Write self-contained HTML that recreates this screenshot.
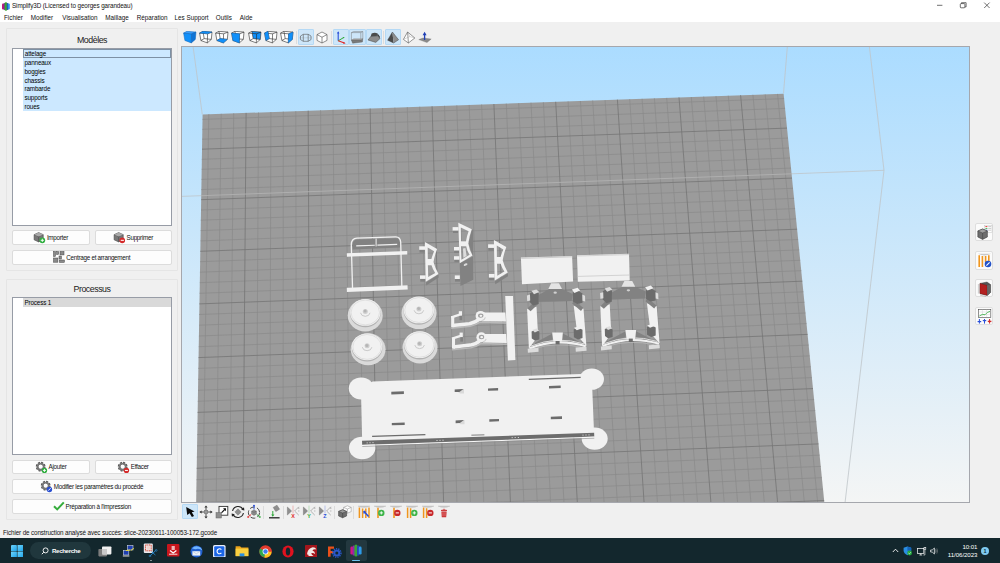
<!DOCTYPE html>
<html lang="fr"><head><meta charset="utf-8"><title>Simplify3D</title>
<style>
*{box-sizing:border-box;margin:0;padding:0}
html,body{width:1000px;height:563px;overflow:hidden;background:#f0f0f0;font-family:"Liberation Sans",sans-serif;color:#000}
.abs{position:absolute}
#titlebar{position:absolute;left:0;top:0;width:1000px;height:22px;background:#fff}
#title{position:absolute;left:12px;top:2px;font-size:6.3px;line-height:8px;color:#111;white-space:nowrap;letter-spacing:-.1px}
.menu{position:absolute;top:13.5px;font-size:6.3px;line-height:8px;color:#111;white-space:nowrap}
.group{position:absolute;border:1px solid #e5e5e5;border-radius:1px;background:#f0f0f0}
.gtitle{position:absolute;left:0;width:100%;text-align:center;font-size:8.8px;line-height:11px;color:#1a1a1a;letter-spacing:-.45px}
.list{position:absolute;background:#fff;border:1px solid #979ca6}
.item{position:absolute;left:9.6px;width:148.6px;height:8.85px;background:#cce8ff;font-size:6.3px;line-height:9.2px;letter-spacing:-.15px;padding-left:1.9px;color:#000;white-space:nowrap}
.btn{position:absolute;height:14.5px;background:#fdfdfd;border:1px solid #dcdcdc;border-radius:2px;font-size:6.3px;letter-spacing:-.28px;line-height:12.5px;white-space:nowrap;color:#111;display:flex;align-items:center;justify-content:center;padding-top:1.2px}
.btn svg{margin-right:1px;flex:none;margin-top:-1.2px}
#viewport{position:absolute;left:181px;top:46px;width:789px;height:457px;border:1px solid #a5a7ad;background:linear-gradient(#abdcff 0%,#f4f5f5 100%);overflow:hidden}
#viewport svg{position:absolute;left:0;top:0}
#status{position:absolute;left:3px;top:528.5px;font-size:6.3px;letter-spacing:-.125px;line-height:8px;color:#111;white-space:nowrap}
#taskbar{position:absolute;left:0;top:538px;width:1000px;height:25px;background:#13272d}
.hl{position:absolute;background:#cde6f9;border:1px solid #b5d9f5;border-radius:1px}
.sep{position:absolute;width:1px;background:#dcdcdc}
</style></head><body>
<div id="titlebar">
<svg class="abs" style="left:2px;top:1.5px" width="8" height="9" viewBox="0 0 8 9"><rect x="0" y="1.6" width="2.2" height="5.8" rx="1" fill="#c2187a"/><rect x="1.6" y="1" width="1.6" height="7" rx=".8" fill="#7a2a9a"/><rect x="2.6" y="0.2" width="2.6" height="8.6" rx="1.3" fill="#3aa635"/><rect x="4.8" y="1" width="1.6" height="7" rx=".8" fill="#2448b8"/><rect x="5.8" y="1.6" width="2" height="5.8" rx="1" fill="#2d9be8"/></svg>
<div id="title">Simplify3D (Licensed to georges garandeau)</div>
<div class="menu" style="left:4px">Fichier</div>
<div class="menu" style="left:30.8px">Modifier</div>
<div class="menu" style="left:62.3px">Visualisation</div>
<div class="menu" style="left:105.3px">Maillage</div>
<div class="menu" style="left:136.8px">Réparation</div>
<div class="menu" style="left:174.6px">Les Support</div>
<div class="menu" style="left:215.8px">Outils</div>
<div class="menu" style="left:239.8px">Aide</div>
<svg class="abs" style="left:930px;top:0" width="70" height="12" viewBox="0 0 70 12"><g stroke="#333" stroke-width="0.7" fill="none"><path d="M7,5.3h5.4"/><rect x="30.3" y="3.6" width="4.6" height="4.2" rx=".8"/><path d="M31.5,3.6v-.9h4.6v4.2h-1.2"/><path d="M54.2,2.6l5.4,5.4M59.6,2.6l-5.4,5.4"/></g></svg>
</div>

<div class="group" style="left:6px;top:28px;width:172px;height:243px">
 <div class="gtitle" style="top:5.8px">Modèles</div>
</div>
<div class="list" style="left:12px;top:48px;width:160px;height:177.5px">
 <div class="item" style="top:0px;border:1px solid #7d90a4;line-height:7.2px;padding-left:1.2px">attelage</div>
 <div class="item" style="top:8.85px">panneaux</div>
 <div class="item" style="top:17.7px">boggies</div>
 <div class="item" style="top:26.55px">chassis</div>
 <div class="item" style="top:35.4px">rambarde</div>
 <div class="item" style="top:44.25px">supports</div>
 <div class="item" style="top:53.1px">roues</div>
</div>
<div class="btn" style="left:12px;top:230px;width:77.5px"><svg width="12.5" height="12.5" viewBox="0 0 11 11"><path d="M1,3.2l4,-1.8l4,1.8v4.6l-4,1.8l-4,-1.8z" fill="#777" stroke="#444" stroke-width=".5"/><path d="M1,3.2l4,1.6l4,-1.6M5,4.8v4.8" stroke="#444" stroke-width=".5" fill="none"/><path d="M1,3.2l4,-1.8l4,1.8l-4,1.6z" fill="#aaa"/><circle cx="8.2" cy="8.2" r="2.5" fill="#2fae3f"/><path d="M6.8,8.2h2.8M8.2,6.8v2.8" stroke="#fff" stroke-width=".8"/></svg>Importer</div>
<div class="btn" style="left:94.5px;top:230px;width:77px"><svg width="12.5" height="12.5" viewBox="0 0 11 11"><path d="M1,3.2l4,-1.8l4,1.8v4.6l-4,1.8l-4,-1.8z" fill="#777" stroke="#444" stroke-width=".5"/><path d="M1,3.2l4,1.6l4,-1.6M5,4.8v4.8" stroke="#444" stroke-width=".5" fill="none"/><path d="M1,3.2l4,-1.8l4,1.8l-4,1.6z" fill="#aaa"/><circle cx="8.2" cy="8.2" r="2.5" fill="#d42a2a"/><path d="M6.8,8.2h2.8" stroke="#fff" stroke-width=".9"/></svg>Supprimer</div>
<div class="btn" style="left:12px;top:250px;width:159.5px"><svg width="12" height="12" viewBox="0 0 12 12"><g fill="#8a8a8a" stroke="#444" stroke-width=".5"><rect x=".5" y=".5" width="2" height="5"/><rect x="3.6" y=".5" width="2" height="3"/><rect x="7" y=".5" width="4" height="3.4"/><rect x=".5" y="7" width="4.4" height="4.2"/><rect x="6" y="5" width="2.4" height="3"/><rect x="6.4" y="9" width="5" height="2.4"/></g></svg>Centrage et arrangement</div>

<div class="group" style="left:6px;top:279px;width:172px;height:241px">
 <div class="gtitle" style="top:3.8px">Processus</div>
</div>
<div class="list" style="left:12px;top:297.3px;width:160px;height:157.5px">
 <div class="item" style="top:0;background:#d9d9d9">Process 1</div>
</div>
<div class="btn" style="left:12px;top:459.6px;width:77.5px;height:14.4px"><svg width="12.5" height="12.5" viewBox="0 0 11 11"><circle cx="5" cy="5" r="3.2" fill="none" stroke="#555" stroke-width="2.2" stroke-dasharray="1.6 .9"/><circle cx="5" cy="5" r="2.7" fill="none" stroke="#777" stroke-width="1.6"/><circle cx="8.3" cy="8.3" r="2.4" fill="#2fae3f"/><path d="M7,8.3h2.6M8.3,7v2.6" stroke="#fff" stroke-width=".8"/></svg>Ajouter</div>
<div class="btn" style="left:94.5px;top:459.6px;width:77px;height:14.4px"><svg width="12.5" height="12.5" viewBox="0 0 11 11"><circle cx="5" cy="5" r="3.2" fill="none" stroke="#555" stroke-width="2.2" stroke-dasharray="1.6 .9"/><circle cx="5" cy="5" r="2.7" fill="none" stroke="#777" stroke-width="1.6"/><circle cx="8.3" cy="8.3" r="2.4" fill="#d42a2a"/><path d="M7,8.3h2.6" stroke="#fff" stroke-width=".9"/></svg>Effacer</div>
<div class="btn" style="left:12px;top:479.2px;width:159.5px"><svg width="12.5" height="12.5" viewBox="0 0 11 11"><circle cx="5" cy="5" r="3.2" fill="none" stroke="#555" stroke-width="2.2" stroke-dasharray="1.6 .9"/><circle cx="5" cy="5" r="2.7" fill="none" stroke="#777" stroke-width="1.6"/><circle cx="8.3" cy="8.3" r="2.4" fill="#2a4fd0"/><path d="M7.2,9.4l2.2,-2.2" stroke="#fff" stroke-width=".8"/></svg>Modifier les paramètres du procédé</div>
<div class="btn" style="left:12px;top:499.4px;width:159.5px;height:14.2px"><svg width="12" height="10" viewBox="0 0 12 10"><path d="M1,5.2l3.2,3.2l6.6,-7" stroke="#36ad3c" stroke-width="2" fill="none"/></svg>Préparation à l'impression</div>

<svg class="abs" style="left:182.6px;top:31.1px" width="14" height="13" viewBox="0 0 14 13"><polygon points="0.6,2.1 8.6,2.8 8.3,11.9 1.9,9.5" fill="#1090fa" stroke="#0d62b8" stroke-width="0.5"/><polygon points="0.6,2.1 8.6,2.8 13.0,1.1 3.9,0.3" fill="#3aa0ff" stroke="#0d62b8" stroke-width="0.5"/><polygon points="8.6,2.8 8.3,11.9 12.3,8.4 13.0,1.1" fill="#0f74d6" stroke="#0d62b8" stroke-width="0.5"/></svg>
<svg class="abs" style="left:198.7px;top:31.1px" width="14" height="13" viewBox="0 0 14 13"><polygon points="0.6,2.1 3.9,0.3 13.0,1.1 12.3,8.4 8.3,11.9 1.9,9.5" fill="#fff" stroke="none"/><polygon points="3.9,0.3 13.0,1.1 12.3,8.4 5.2,7.6" fill="none" stroke="#2a2a2a" stroke-width="0.6"/><polygon points="0.6,2.1 8.6,2.8 8.3,11.9 1.9,9.5" fill="none" stroke="#2a2a2a" stroke-width="0.6"/><path d="M0.6,2.1L3.9,0.3" stroke="#2a2a2a" stroke-width=".6"/><path d="M8.6,2.8L13.0,1.1" stroke="#2a2a2a" stroke-width=".6"/><path d="M8.3,11.9L12.3,8.4" stroke="#2a2a2a" stroke-width=".6"/><path d="M1.9,9.5L5.2,7.6" stroke="#2a2a2a" stroke-width=".6"/><polygon points="0.6,2.1 8.6,2.8 13.0,1.1 3.9,0.3" fill="#1090fa" stroke="#0d5fb0" stroke-width="0.4"/></svg>
<svg class="abs" style="left:214.9px;top:31.1px" width="14" height="13" viewBox="0 0 14 13"><polygon points="0.6,2.1 3.9,0.3 13.0,1.1 12.3,8.4 8.3,11.9 1.9,9.5" fill="#fff" stroke="none"/><polygon points="3.9,0.3 13.0,1.1 12.3,8.4 5.2,7.6" fill="none" stroke="#2a2a2a" stroke-width="0.6"/><polygon points="0.6,2.1 8.6,2.8 8.3,11.9 1.9,9.5" fill="none" stroke="#2a2a2a" stroke-width="0.6"/><path d="M0.6,2.1L3.9,0.3" stroke="#2a2a2a" stroke-width=".6"/><path d="M8.6,2.8L13.0,1.1" stroke="#2a2a2a" stroke-width=".6"/><path d="M8.3,11.9L12.3,8.4" stroke="#2a2a2a" stroke-width=".6"/><path d="M1.9,9.5L5.2,7.6" stroke="#2a2a2a" stroke-width=".6"/><polygon points="1.9,9.5 8.3,11.9 12.3,8.4 5.2,7.6" fill="#1090fa" stroke="#0d5fb0" stroke-width="0.4"/></svg>
<svg class="abs" style="left:231.4px;top:31.1px" width="14" height="13" viewBox="0 0 14 13"><polygon points="0.6,2.1 3.9,0.3 13.0,1.1 12.3,8.4 8.3,11.9 1.9,9.5" fill="#fff" stroke="none"/><polygon points="3.9,0.3 13.0,1.1 12.3,8.4 5.2,7.6" fill="none" stroke="#2a2a2a" stroke-width="0.6"/><polygon points="0.6,2.1 8.6,2.8 8.3,11.9 1.9,9.5" fill="none" stroke="#2a2a2a" stroke-width="0.6"/><path d="M0.6,2.1L3.9,0.3" stroke="#2a2a2a" stroke-width=".6"/><path d="M8.6,2.8L13.0,1.1" stroke="#2a2a2a" stroke-width=".6"/><path d="M8.3,11.9L12.3,8.4" stroke="#2a2a2a" stroke-width=".6"/><path d="M1.9,9.5L5.2,7.6" stroke="#2a2a2a" stroke-width=".6"/><polygon points="0.6,2.1 8.6,2.8 8.3,11.9 1.9,9.5" fill="#1090fa" stroke="#0d5fb0" stroke-width="0.4"/></svg>
<svg class="abs" style="left:247.6px;top:31.1px" width="14" height="13" viewBox="0 0 14 13"><polygon points="0.6,2.1 3.9,0.3 13.0,1.1 12.3,8.4 8.3,11.9 1.9,9.5" fill="#fff" stroke="none"/><polygon points="3.9,0.3 13.0,1.1 12.3,8.4 5.2,7.6" fill="#1090fa" stroke="none"/><polygon points="3.9,0.3 13.0,1.1 12.3,8.4 5.2,7.6" fill="none" stroke="#2a2a2a" stroke-width="0.6"/><polygon points="0.6,2.1 8.6,2.8 8.3,11.9 1.9,9.5" fill="none" stroke="#2a2a2a" stroke-width="0.6"/><path d="M0.6,2.1L3.9,0.3" stroke="#2a2a2a" stroke-width=".6"/><path d="M8.6,2.8L13.0,1.1" stroke="#2a2a2a" stroke-width=".6"/><path d="M8.3,11.9L12.3,8.4" stroke="#2a2a2a" stroke-width=".6"/><path d="M1.9,9.5L5.2,7.6" stroke="#2a2a2a" stroke-width=".6"/></svg>
<svg class="abs" style="left:263.8px;top:31.1px" width="14" height="13" viewBox="0 0 14 13"><polygon points="0.6,2.1 3.9,0.3 13.0,1.1 12.3,8.4 8.3,11.9 1.9,9.5" fill="#fff" stroke="none"/><polygon points="3.9,0.3 13.0,1.1 12.3,8.4 5.2,7.6" fill="none" stroke="#2a2a2a" stroke-width="0.6"/><polygon points="0.6,2.1 8.6,2.8 8.3,11.9 1.9,9.5" fill="none" stroke="#2a2a2a" stroke-width="0.6"/><path d="M0.6,2.1L3.9,0.3" stroke="#2a2a2a" stroke-width=".6"/><path d="M8.6,2.8L13.0,1.1" stroke="#2a2a2a" stroke-width=".6"/><path d="M8.3,11.9L12.3,8.4" stroke="#2a2a2a" stroke-width=".6"/><path d="M1.9,9.5L5.2,7.6" stroke="#2a2a2a" stroke-width=".6"/><polygon points="0.6,2.1 1.9,9.5 5.2,7.6 3.9,0.3" fill="#1090fa" stroke="#0d5fb0" stroke-width="0.4"/></svg>
<svg class="abs" style="left:280.0px;top:31.1px" width="14" height="13" viewBox="0 0 14 13"><polygon points="0.6,2.1 3.9,0.3 13.0,1.1 12.3,8.4 8.3,11.9 1.9,9.5" fill="#fff" stroke="none"/><polygon points="3.9,0.3 13.0,1.1 12.3,8.4 5.2,7.6" fill="none" stroke="#2a2a2a" stroke-width="0.6"/><polygon points="0.6,2.1 8.6,2.8 8.3,11.9 1.9,9.5" fill="none" stroke="#2a2a2a" stroke-width="0.6"/><path d="M0.6,2.1L3.9,0.3" stroke="#2a2a2a" stroke-width=".6"/><path d="M8.6,2.8L13.0,1.1" stroke="#2a2a2a" stroke-width=".6"/><path d="M8.3,11.9L12.3,8.4" stroke="#2a2a2a" stroke-width=".6"/><path d="M1.9,9.5L5.2,7.6" stroke="#2a2a2a" stroke-width=".6"/><polygon points="8.6,2.8 8.3,11.9 12.3,8.4 13.0,1.1" fill="#1090fa" stroke="#0d5fb0" stroke-width="0.4"/></svg>
<div class="sep" style="left:295.8px;top:30.5px;height:13px"></div>
<div class="hl" style="left:298.3px;top:29.2px;width:16px;height:15.6px"></div>
<svg class="abs" style="left:299.3px;top:31.1px" width="14" height="13" viewBox="0 0 14 13"><g fill="none" stroke="#555" stroke-width=".6"><path d="M4.3,3.3H9.2V10.3H4.3z"/><path d="M4.3,3.3L1.5,5V8.6L4.3,10.3M9.2,3.3L12,5V8.6L9.2,10.3"/><path d="M0.4,6.8H13.2" stroke="#888" stroke-width=".4" stroke-dasharray=".8 .5"/></g></svg>
<svg class="abs" style="left:314.9px;top:31.1px" width="14" height="13" viewBox="0 0 14 13"><g fill="#fff" stroke="#444" stroke-width=".6"><path d="M7,1L12,3.6v5.8L7,12L2,9.4V3.6z"/><path d="M2,3.6L7,6.2L12,3.6M7,6.2V12" fill="none"/></g></svg>
<div class="sep" style="left:331px;top:30.5px;height:13px"></div>
<div class="hl" style="left:332.9px;top:29.2px;width:16.4px;height:15.6px"></div>
<div class="hl" style="left:349.2px;top:29.2px;width:16.4px;height:15.6px"></div>
<div class="hl" style="left:365.5px;top:29.2px;width:16.4px;height:15.6px"></div>
<svg class="abs" style="left:334.1px;top:31.1px" width="14" height="13" viewBox="0 0 14 13"><path d="M4.2,1.2V9.8" stroke="#2a4fd8" stroke-width="1.1"/><path d="M4.2,9.8L9.6,6.6" stroke="#2faa3a" stroke-width="1"/><path d="M4.2,9.8L10.4,12" stroke="#e02626" stroke-width="1.1"/><path d="M3,2.4L4.2,0.2L5.4,2.4z" fill="#2a4fd8"/><path d="M8.6,6L10.6,6L9.6,7.6z" fill="#2faa3a"/><path d="M9.6,10.8L11.6,12.4L9.2,12.8z" fill="#e02626"/></svg>
<svg class="abs" style="left:350.4px;top:31.1px" width="14" height="13" viewBox="0 0 14 13"><g fill="none" stroke="#777" stroke-width=".5"><path d="M1.4,1.6H10.8V9H1.4z"/><path d="M3.6,0.6H12.8V7.4"/><path d="M1.4,1.6L3.6,0.6M10.8,1.6L12.8,0.6"/></g><path d="M1.4,9L10.8,9L12.8,7.4L12.4,11L2.6,12.2z" fill="#7a7a7a" stroke="#555" stroke-width=".4"/><path d="M1.4,9L10.8,9L12.8,7.4L3.6,7.4z" fill="#9a9a9a"/></svg>
<svg class="abs" style="left:366.7px;top:31.1px" width="14" height="13" viewBox="0 0 14 13"><path d="M1,9L3.6,5.6L11,4.8L13,7.6L8.8,11.4z" fill="#8c8c8c" stroke="#4a4a4a" stroke-width=".5"/><path d="M3.6,5.6L4.6,2.6Q7.5,1.2 10.6,2.4L11,4.8z" fill="#4a4a4a"/><path d="M11,4.8L10.6,2.4L12.6,5.2L13,7.6z" fill="#333"/></svg>
<div class="sep" style="left:383px;top:30.5px;height:13px"></div>
<div class="hl" style="left:385.0px;top:29.2px;width:16px;height:15.6px"></div>
<svg class="abs" style="left:386.0px;top:31.1px" width="14" height="13" viewBox="0 0 14 13"><path d="M6.4,1L1.6,9.2L7.6,12z" fill="#4a4a4a"/><path d="M6.4,1L12.6,8.8L7.6,12z" fill="#8e8e8e"/><path d="M6.4,1L1.6,9.2L7.6,12L12.6,8.8z" fill="none" stroke="#333" stroke-width=".4"/></svg>
<svg class="abs" style="left:401.9px;top:31.1px" width="14" height="13" viewBox="0 0 14 13"><g fill="#fff" stroke="#444" stroke-width=".55"><path d="M5.6,1L1.4,8.4L6.4,12L12.8,7z"/><path d="M5.6,1L6.4,12" fill="none"/><path d="M1.4,8.4L7.8,5.6L12.8,7M5.6,1L7.8,5.6" stroke="#999" stroke-width=".4" fill="none"/></g></svg>
<svg class="abs" style="left:417.8px;top:31.1px" width="14" height="13" viewBox="0 0 14 13"><path d="M0.8,8.6L5,7L13.2,8L9,11.6z" fill="#8a8a8a" stroke="#666" stroke-width=".3"/><path d="M6.6,9V3.4" stroke="#1f3fb5" stroke-width="1.3"/><path d="M4.6,4.2L6.6,0.8L8.6,4.2z" fill="#1f3fb5"/></svg>
<div id="viewport"><svg width="787" height="455" viewBox="0 0 787 455">
<polygon points="20.6,67.5 601.6,46.7 652.0,552.4 12.1,578.5" fill="#9b9b9b"/>
<path d="M26.8,67.2L18.9,578.2M12.2,572.5L651.4,546.5M39.2,66.8L32.6,577.6M12.4,560.6L650.2,534.7M51.7,66.3L46.3,577.1M12.6,548.7L649.1,522.9M76.5,65.5L73.7,576.0M12.9,525.1L646.7,499.6M88.9,65.0L87.4,575.4M13.1,513.4L645.6,488.0M101.3,64.6L101.0,574.8M13.3,501.7L644.4,476.4M113.8,64.1L114.7,574.3M13.5,490.1L643.3,464.9M138.6,63.2L142.1,573.2M13.9,467.0L641.0,442.1M151.0,62.8L155.7,572.6M14.1,455.5L639.9,430.7M163.4,62.4L169.4,572.1M14.3,444.0L638.8,419.4M175.8,61.9L183.0,571.5M14.5,432.7L637.6,408.2M200.6,61.0L210.4,570.4M14.9,410.0L635.4,385.8M212.9,60.6L224.0,569.8M15.1,398.8L634.3,374.7M225.3,60.1L237.6,569.3M15.2,387.6L633.2,363.6M237.7,59.7L251.3,568.7M15.4,376.5L632.1,352.6M262.5,58.8L278.5,567.6M15.8,354.3L629.9,330.6M274.8,58.4L292.2,567.1M16.0,343.3L628.8,319.8M287.2,57.9L305.8,566.5M16.2,332.4L627.7,308.9M299.6,57.5L319.4,565.9M16.3,321.4L626.7,298.1M324.3,56.6L346.7,564.8M16.7,299.7L624.5,276.6M336.7,56.2L360.3,564.3M16.9,289.0L623.5,266.0M349.0,55.7L373.9,563.7M17.1,278.2L622.4,255.3M361.4,55.3L387.5,563.2M17.2,267.5L621.4,244.8M386.1,54.4L414.7,562.1M17.6,246.3L619.3,223.7M398.4,54.0L428.3,561.5M17.8,235.7L618.2,213.3M410.7,53.5L441.8,561.0M17.9,225.2L617.2,202.9M423.1,53.1L455.4,560.4M18.1,214.7L616.1,192.5M447.7,52.2L482.6,559.3M18.5,193.9L614.1,171.9M460.1,51.8L496.2,558.7M18.6,183.6L613.1,161.6M472.4,51.3L509.7,558.2M18.8,173.2L612.1,151.4M484.7,50.9L523.3,557.6M19.0,163.0L611.0,141.3M509.3,50.0L550.4,556.5M19.3,142.6L609.0,121.1M521.7,49.6L564.0,556.0M19.5,132.4L608.0,111.0M534.0,49.1L577.5,555.4M19.7,122.3L607.0,101.0M546.3,48.7L591.1,554.9M19.8,112.3L606.0,91.1M570.9,47.8L618.2,553.8M20.2,92.2L604.1,71.2M583.2,47.4L631.7,553.2M20.3,82.3L603.1,61.4M595.5,46.9L645.2,552.7M20.5,72.4L602.1,51.6" stroke="#8a8a8a" stroke-width="0.7" fill="none"/>
<path d="M64.1,65.9L60.0,576.5M12.7,536.9L647.9,511.2M126.2,63.7L128.4,573.7M13.7,478.5L642.1,453.5M188.2,61.5L196.7,570.9M14.7,421.3L636.5,396.9M250.1,59.3L264.9,568.2M15.6,365.4L631.0,341.6M311.9,57.0L333.0,565.4M16.5,310.6L625.6,287.4M373.7,54.8L401.1,562.6M17.4,256.9L620.3,234.2M435.4,52.6L469.0,559.8M18.3,204.3L615.1,182.2M497.0,50.4L536.9,557.1M19.2,152.7L610.0,131.1M558.6,48.2L604.6,554.3M20.0,102.2L605.0,81.1" stroke="#757575" stroke-width="0.8" fill="none"/>
<path d="M11.0,-1.0L20.3,67.6M605.4,-1.0L601.5,46.4M687.3,-1.0L702.0,123.3M702.0,123.3L663.0,456.0M-1.0,149.4L19.2,148.7M610.0,126.8L702.0,123.3" stroke="#bfc5c9" stroke-width="0.8" fill="none"/>
<path d="M19.2,148.7L610.0,126.8" stroke="#b4b4b4" stroke-width="0.8" fill="none"/>
<g transform="translate(-182,-47)">
<path d="M352.6,249.5V244.6Q352.6,239.6 357.2,239.4L395.4,238.2Q399.6,238.2 400,242.6V247.4L352.6,249.5z" fill="#828282"/>
<path d="M352.6,290.6L351.3,245Q351.2,238.4 357,238.1L395.6,236.9Q400.4,236.8 400.7,242.4L401.9,288.4" fill="none" stroke="#f1f1f1" stroke-width="1.3"/>
<path d="M356.2,245.9L374.8,245.3M377.4,245.1L397.2,244.4" stroke="#f1f1f1" stroke-width="1.1"/><path d="M376.1,238.6V246.4" stroke="#f1f1f1" stroke-width="1"/>
<polygon points="346.8,253.2 407.2,251.0 407.3,254.4 346.9,256.8" fill="#f1f1f1"/>
<polygon points="346.8,287.8 407.5,285.3 407.7,289.5 346.9,291.9" fill="#f1f1f1"/>
<rect x="419.5" y="249.6" width="5.2" height="3.0" fill="#828282"/><rect x="420.3" y="278.6" width="5.0" height="3.0" fill="#828282"/><polygon points="425.9,282.6 438.5,274.6 438.7,277.6 426.3,285.4" fill="#828282"/><path fill-rule="evenodd" fill="#f1f1f1" d="M424.9,242.0L437.1,249.1Q434.5,256.0 433.5,261.9Q435.1,268.0 438.5,274.0L425.7,281.8zM427.7,247.6L434.1,251.3Q432.3,255.8 431.4,258.9L427.8,258.9zM427.9,265.3L431.5,265.3Q432.8,269.6 435.2,273.0L428.2,277.1z"/><rect x="419.2" y="246.3" width="6.0" height="3.5" fill="#f1f1f1"/><rect x="420.0" y="275.4" width="5.6" height="3.5" fill="#f1f1f1"/>
<rect x="488.4" y="247.7" width="5.3" height="3.1" fill="#828282"/><rect x="489.2" y="277.2" width="5.1" height="3.1" fill="#828282"/><polygon points="494.9,281.3 507.8,273.2 508.0,276.2 495.3,284.2" fill="#828282"/><path fill-rule="evenodd" fill="#f1f1f1" d="M493.9,239.9L506.3,247.1Q503.7,254.2 502.7,260.2Q504.3,266.4 507.8,272.5L494.7,280.5zM496.8,245.6L503.3,249.4Q501.4,254.0 500.5,257.1L496.9,257.1zM497.0,263.7L500.6,263.7Q502.0,268.1 504.4,271.5L497.3,275.7z"/><rect x="488.1" y="244.3" width="6.1" height="3.6" fill="#f1f1f1"/><rect x="488.9" y="274.0" width="5.7" height="3.6" fill="#f1f1f1"/>
<polygon points="459.7,263.3 473.2,256.2 473.3,279.7 460.5,286" fill="#828282"/>
<polygon points="471.8,229.2 473.2,230 473.2,256.2 472.5,255.5 468.6,243.4" fill="#828282"/>
<rect x="453" y="230.4" width="5.4" height="2.6" fill="#828282"/><rect x="454.2" y="250.4" width="5" height="2.6" fill="#828282"/><rect x="454.4" y="259.6" width="5" height="2.6" fill="#828282"/><rect x="455" y="279" width="5" height="2.6" fill="#828282"/>
<path fill-rule="evenodd" fill="#f1f1f1" d="M458.3,222.8L471.8,229.2Q469,236.6 468.3,243.4Q469.4,250 472.5,255.5L459.7,263.3zM460.8,227.6L468.6,231.2Q466.6,236.6 466,241.2L461,241.2zM461,246.2L466.2,246.2Q467,251 469.6,254.8L461.4,259.8z"/>
<polygon points="463,248.6 465.4,248 466.6,256 463.4,257.8" fill="#dcdcdc"/>
<rect x="452.6" y="227.1" width="5.9" height="3.5" fill="#f1f1f1"/><rect x="454" y="247" width="5.2" height="3.5" fill="#f1f1f1"/><rect x="454" y="256.2" width="5.4" height="3.5" fill="#f1f1f1"/><rect x="454.8" y="275.4" width="5" height="3.6" fill="#f1f1f1"/>
<ellipse cx="465.6" cy="264.6" rx="2" ry="1.1" fill="#dcdcdc" transform="rotate(-25 465.6 264.6)"/>
<ellipse cx="365.2" cy="315.4" rx="17.5" ry="16" fill="#dadada"/><ellipse cx="365.3" cy="313.4" rx="15.3" ry="13.8" fill="#b2b2b2"/><ellipse cx="365.3" cy="312.4" rx="15.2" ry="13.4" fill="#f1f1f1"/><ellipse cx="365.3" cy="312.5" rx="14.2" ry="12.4" fill="none" stroke="#cfcfcf" stroke-width=".5"/><path d="M360.5,312.79999999999995A4.9,4.4 0 0 0 370.1,312.79999999999995" fill="none" stroke="#c4c4c4" stroke-width=".9"/><circle cx="365.3" cy="311.4" r="2.5" fill="#cfcfcf"/><circle cx="365.1" cy="311.09999999999997" r="1.5" fill="#b5b5b5"/>
<ellipse cx="419" cy="313.1" rx="17.5" ry="16" fill="#dadada"/><ellipse cx="418.9" cy="310.90000000000003" rx="15.3" ry="13.8" fill="#b2b2b2"/><ellipse cx="418.9" cy="309.90000000000003" rx="15.2" ry="13.4" fill="#f1f1f1"/><ellipse cx="418.9" cy="310.00000000000006" rx="14.2" ry="12.4" fill="none" stroke="#cfcfcf" stroke-width=".5"/><path d="M414.09999999999997,310.3A4.9,4.4 0 0 0 423.7,310.3" fill="none" stroke="#c4c4c4" stroke-width=".9"/><circle cx="418.9" cy="308.90000000000003" r="2.5" fill="#cfcfcf"/><circle cx="418.7" cy="308.6" r="1.5" fill="#b5b5b5"/>
<ellipse cx="368.1" cy="349.3" rx="17.5" ry="16" fill="#dadada"/><ellipse cx="367.1" cy="347.8" rx="15.3" ry="13.8" fill="#b2b2b2"/><ellipse cx="367.1" cy="346.8" rx="15.2" ry="13.4" fill="#f1f1f1"/><ellipse cx="367.1" cy="346.90000000000003" rx="14.2" ry="12.4" fill="none" stroke="#cfcfcf" stroke-width=".5"/><path d="M362.3,347.2A4.9,4.4 0 0 0 371.90000000000003,347.2" fill="none" stroke="#c4c4c4" stroke-width=".9"/><circle cx="367.1" cy="345.8" r="2.5" fill="#cfcfcf"/><circle cx="366.90000000000003" cy="345.5" r="1.5" fill="#b5b5b5"/>
<ellipse cx="420" cy="347.5" rx="17.5" ry="16" fill="#dadada"/><ellipse cx="419.6" cy="345.7" rx="15.3" ry="13.8" fill="#b2b2b2"/><ellipse cx="419.6" cy="344.7" rx="15.2" ry="13.4" fill="#f1f1f1"/><ellipse cx="419.6" cy="344.8" rx="14.2" ry="12.4" fill="none" stroke="#cfcfcf" stroke-width=".5"/><path d="M414.8,345.09999999999997A4.9,4.4 0 0 0 424.40000000000003,345.09999999999997" fill="none" stroke="#c4c4c4" stroke-width=".9"/><circle cx="419.6" cy="343.7" r="2.5" fill="#cfcfcf"/><circle cx="419.40000000000003" cy="343.4" r="1.5" fill="#b5b5b5"/>
<polygon points="505.2,296 513,296 515.4,360 507.9,360.6" fill="#f1f1f1"/>
<path d="M451.2,328.3L470.0,326.3Q476.4,325.0 480.0,322.2L506.0,322.9" fill="none" stroke="#b9b9b9" stroke-width="1.5"/><polygon points="484.0,312.6 505.4,312.6 506.0,321.5 482.0,321.2" fill="#f1f1f1"/><circle cx="480.6" cy="315.9" r="5" fill="#f1f1f1"/><path d="M485.4,317.4A5,5 0 0 1 482.2,320.6" fill="none" stroke="#cdcdcd" stroke-width="1.1"/><path d="M479.6,318.8Q475.4,322.6 469.4,323.7L452.4,325.6" fill="none" stroke="#f1f1f1" stroke-width="3.5"/><path d="M452.7,327.2V316.4" stroke="#f1f1f1" stroke-width="3.1" fill="none"/><path d="M451.2,317.3L460.6,314.3" stroke="#f1f1f1" stroke-width="2.3" fill="none"/><rect x="458.8" y="311.2" width="3.2" height="4.6" fill="#f1f1f1"/><rect x="459.5" y="315.8" width="2.7" height="4.4" fill="#828282"/><ellipse cx="480.7" cy="315.6" rx="2.7" ry="2.2" fill="#a0a0a0"/><ellipse cx="480.9" cy="315.8" rx="1.4" ry="1.1" fill="#f4f4f4"/>
<path d="M452.0,349.7L470.8,347.7Q477.2,346.4 480.8,343.6L506.8,344.3" fill="none" stroke="#b9b9b9" stroke-width="1.5"/><polygon points="484.8,334.0 506.2,334.0 506.8,342.9 482.8,342.6" fill="#f1f1f1"/><circle cx="481.4" cy="337.3" r="5" fill="#f1f1f1"/><path d="M486.2,338.8A5,5 0 0 1 483.0,342.0" fill="none" stroke="#cdcdcd" stroke-width="1.1"/><path d="M480.4,340.2Q476.2,344.0 470.2,345.1L453.2,347.0" fill="none" stroke="#f1f1f1" stroke-width="3.5"/><path d="M453.5,348.6V337.8" stroke="#f1f1f1" stroke-width="3.1" fill="none"/><path d="M452.0,338.7L461.4,335.7" stroke="#f1f1f1" stroke-width="2.3" fill="none"/><rect x="459.6" y="332.6" width="3.2" height="4.6" fill="#f1f1f1"/><rect x="460.3" y="337.2" width="2.7" height="4.4" fill="#828282"/><ellipse cx="481.5" cy="337.0" rx="2.7" ry="2.2" fill="#a0a0a0"/><ellipse cx="481.7" cy="337.2" rx="1.4" ry="1.1" fill="#f4f4f4"/>
<polygon points="520.9,257.6 572.1,256 573.1,281.5 522,284.2" fill="#f1f1f1"/><path d="M521.2,258.4L572.3,256.8" stroke="#bdbdbd" stroke-width=".7"/>
<polygon points="577,255.2 629,253.8 629.8,280.4 577.8,281.8" fill="#f1f1f1"/><path d="M577.2,256L629.2,254.6M577.8,276.4L629.8,275" stroke="#c4c4c4" stroke-width=".7"/>
<g id="bogf"><polygon points="527.1,308.7 536.5,306.7 538.1,336.1 528.9,348.6" fill="#f1f1f1"/><polygon points="573.7,305.7 583.5,308.7 586.4,346 577.6,336" fill="#f1f1f1"/><polygon points="527.4,308.4 535.6,300.4 538.6,303.6 530.6,311.2" fill="#828282"/><polygon points="574.2,300.4 583.2,307.8 581,311 572.2,303.6" fill="#828282"/><polygon points="538.5,295 549.2,289.1 562,289.1 572.7,294 571.7,300.9 538.5,301.8" fill="#828282"/><polygon points="551.2,283.3 559,283.3 562,289.1 548.3,289.1" fill="#e4e4e4"/><ellipse cx="555.2" cy="292.7" rx="1.7" ry="1.1" fill="#d0d0d0"/><polygon points="529.7,293.6 534.6,290.4 538.8,293.2 538.6,304 533.2,305.6 529.7,302" fill="#6c6c6c"/><polygon points="531.4,290.8 536.4,289.4 539.2,292 534,294.2" fill="#dcdcdc"/><polygon points="572.7,292.6 577.6,290.6 582.5,293.4 582.5,302.8 577.4,304 572.9,301.4" fill="#6c6c6c"/><polygon points="571.9,289.6 577.6,287.8 580.2,290.6 574.4,293" fill="#f1f1f1"/><polygon points="526.9,295.4 530,294.6 530.2,300.6 527.2,301.2" fill="#dcdcdc"/><polygon points="582.3,294.6 585,295.8 585.2,301.6 582.5,300.8" fill="#dcdcdc"/><polygon points="531.6,331.4 536,329.6 539.4,331.8 539.4,339.4 534.8,340.6 531.8,338.4" fill="#6c6c6c"/><polygon points="532.4,330 536.6,328.6 539,330.6 534.8,332.4" fill="#dcdcdc"/><polygon points="573.7,329.4 578.2,327.6 582.5,329.8 582.5,338 578,339.4 573.9,337.2" fill="#6c6c6c"/><polygon points="574,327.8 578.6,326.4 581.4,328.4 576.8,330.2" fill="#f1f1f1"/><polygon points="552.4,333.6 535.6,342.6 532.4,347.4 552.4,339.4" fill="#828282"/><polygon points="562.8,333.6 578.4,341.6 582.8,346.4 562.8,339.4" fill="#828282"/><path d="M529.4,348.4Q557,337.6 585.8,346.2" fill="none" stroke="#f1f1f1" stroke-width="2.2"/><path d="M531,346Q557,335.6 584,343.8" fill="none" stroke="#dcdcdc" stroke-width="1"/><path d="M534,348.6Q557,341.6 581,347.2" fill="none" stroke="#b9b9b9" stroke-width=".8"/><polygon points="552.2,332.4 562.9,332.4 561.8,341.6 553.4,341.6" fill="#f1f1f1"/><rect x="555.6" y="341" width="4" height="3.4" fill="#6c6c6c"/><polygon points="527.7,348.8 538.5,347.8 538.6,351.7 527.9,352.8" fill="#dcdcdc"/><polygon points="575.6,347.6 586.4,346.8 586.6,350.7 575.8,351.7" fill="#dcdcdc"/></g>
<g transform="translate(73.2,-2.4)"><polygon points="527.1,308.7 536.5,306.7 538.1,336.1 528.9,348.6" fill="#f1f1f1"/><polygon points="573.7,305.7 583.5,308.7 586.4,346 577.6,336" fill="#f1f1f1"/><polygon points="527.4,308.4 535.6,300.4 538.6,303.6 530.6,311.2" fill="#828282"/><polygon points="574.2,300.4 583.2,307.8 581,311 572.2,303.6" fill="#828282"/><polygon points="538.5,295 549.2,289.1 562,289.1 572.7,294 571.7,300.9 538.5,301.8" fill="#828282"/><polygon points="551.2,283.3 559,283.3 562,289.1 548.3,289.1" fill="#e4e4e4"/><ellipse cx="555.2" cy="292.7" rx="1.7" ry="1.1" fill="#d0d0d0"/><polygon points="529.7,293.6 534.6,290.4 538.8,293.2 538.6,304 533.2,305.6 529.7,302" fill="#6c6c6c"/><polygon points="531.4,290.8 536.4,289.4 539.2,292 534,294.2" fill="#dcdcdc"/><polygon points="572.7,292.6 577.6,290.6 582.5,293.4 582.5,302.8 577.4,304 572.9,301.4" fill="#6c6c6c"/><polygon points="571.9,289.6 577.6,287.8 580.2,290.6 574.4,293" fill="#f1f1f1"/><polygon points="526.9,295.4 530,294.6 530.2,300.6 527.2,301.2" fill="#dcdcdc"/><polygon points="582.3,294.6 585,295.8 585.2,301.6 582.5,300.8" fill="#dcdcdc"/><polygon points="531.6,331.4 536,329.6 539.4,331.8 539.4,339.4 534.8,340.6 531.8,338.4" fill="#6c6c6c"/><polygon points="532.4,330 536.6,328.6 539,330.6 534.8,332.4" fill="#dcdcdc"/><polygon points="573.7,329.4 578.2,327.6 582.5,329.8 582.5,338 578,339.4 573.9,337.2" fill="#6c6c6c"/><polygon points="574,327.8 578.6,326.4 581.4,328.4 576.8,330.2" fill="#f1f1f1"/><polygon points="552.4,333.6 535.6,342.6 532.4,347.4 552.4,339.4" fill="#828282"/><polygon points="562.8,333.6 578.4,341.6 582.8,346.4 562.8,339.4" fill="#828282"/><path d="M529.4,348.4Q557,337.6 585.8,346.2" fill="none" stroke="#f1f1f1" stroke-width="2.2"/><path d="M531,346Q557,335.6 584,343.8" fill="none" stroke="#dcdcdc" stroke-width="1"/><path d="M534,348.6Q557,341.6 581,347.2" fill="none" stroke="#b9b9b9" stroke-width=".8"/><polygon points="552.2,332.4 562.9,332.4 561.8,341.6 553.4,341.6" fill="#f1f1f1"/><rect x="555.6" y="341" width="4" height="3.4" fill="#6c6c6c"/><polygon points="527.7,348.8 538.5,347.8 538.6,351.7 527.9,352.8" fill="#dcdcdc"/><polygon points="575.6,347.6 586.4,346.8 586.6,350.7 575.8,351.7" fill="#dcdcdc"/></g>
<ellipse cx="361.2" cy="388.4" rx="12.4" ry="11" fill="#f1f1f1"/><ellipse cx="362.2" cy="448" rx="13.2" ry="11.2" fill="#f1f1f1"/><ellipse cx="591.8" cy="379.1" rx="12.2" ry="10.7" fill="#f1f1f1"/><ellipse cx="594.7" cy="438.6" rx="13" ry="11.2" fill="#f1f1f1"/>
<polygon points="360.9,389 372.6,381.4 580.7,374 591.9,380 594.1,434 362.2,442.4" fill="#f1f1f1"/>
<polygon points="362,440.7 594.1,432.8 594.3,436.4 362.2,444.8" fill="#6c6c6c"/><path d="M362.2,445.5L594.3,437.2" stroke="#fafafa" stroke-width="1"/><path d="M362.3,446.5L594.3,438.2" stroke="#8a8a8a" stroke-width=".6"/>
<polygon points="391.3,391.7 403.9,391.3 403.9,394.1 391.3,394.5" fill="#6c6c6c"/>
<polygon points="391.8,422.9 404.7,422.5 404.7,424.90000000000003 391.8,425.3" fill="#6c6c6c"/>
<polygon points="488,388.4 498.1,388 498.1,390.40000000000003 488,390.8" fill="#6c6c6c"/>
<polygon points="489.3,419.29999999999995 499,418.9 499,421.3 489.3,421.7" fill="#6c6c6c"/>
<polygon points="549,385.9 560.7,385.5 560.7,388.1 549,388.5" fill="#6c6c6c"/>
<polygon points="550.8,416.7 562,416.3 562,418.90000000000003 550.8,419.3" fill="#6c6c6c"/>
<polygon points="454.7,389.5 464,388.9 464,393.6 460,393.6" fill="#dadada"/><polygon points="454.7,389.5 463.4,388.9 459.4,391.9 454.7,392.09999999999997" fill="#6c6c6c"/>
<polygon points="455.6,420.6 464.5,420 464.5,424.3 460.5,424.3" fill="#dadada"/><polygon points="455.6,420.6 463.9,420 459.9,423 455.6,423.2" fill="#6c6c6c"/>
<path d="M372.1,436.4L425.4,434.6M528.8,379.3L580.7,377.4" stroke="#6c6c6c" stroke-width="1.3"/><path d="M471.4,435.2L484.4,434.8" stroke="#a5a5a5" stroke-width="1.4"/>
<rect x="366.6" y="442.5" width="1.2" height=".8" fill="#e8e8e8"/>
<rect x="369.4" y="442.4" width="1.2" height=".8" fill="#e8e8e8"/>
<rect x="372.4" y="442.3" width="1.2" height=".8" fill="#e8e8e8"/>
<rect x="436.4" y="440.0" width="1.2" height=".8" fill="#e8e8e8"/>
<rect x="439.4" y="439.9" width="1.2" height=".8" fill="#e8e8e8"/>
<rect x="442.4" y="439.8" width="1.2" height=".8" fill="#e8e8e8"/>
<rect x="511.6" y="437.3" width="1.2" height=".8" fill="#e8e8e8"/>
<rect x="514.6" y="437.2" width="1.2" height=".8" fill="#e8e8e8"/>
<rect x="517.8" y="437.1" width="1.2" height=".8" fill="#e8e8e8"/>
<rect x="582.4" y="434.7" width="1.2" height=".8" fill="#e8e8e8"/>
<rect x="585.4" y="434.6" width="1.2" height=".8" fill="#e8e8e8"/>
<rect x="588.4" y="434.5" width="1.2" height=".8" fill="#e8e8e8"/>
</g>
</svg></div>
<div class="hl" style="left:181.8px;top:504px;width:16px;height:15.2px"></div>
<svg class="abs" style="left:181.8px;top:504.2px" width="16" height="16" viewBox="0 0 16 16"><path d="M4.2,3L12.6,7.6L9.8,8.3L12,11.9L9.9,13.1L7.6,9.3L5.2,11.1z" fill="#0a0a0a"/></svg>
<svg class="abs" style="left:198.0px;top:504.2px" width="16" height="16" viewBox="0 0 16 16"><g fill="#222"><path d="M8,1.4L9.6,3.6H6.4z"/><path d="M8,14.6L9.6,12.4H6.4z"/><path d="M1.4,8L3.6,6.4V9.6z"/><path d="M14.6,8L12.4,6.4V9.6z"/></g><path d="M8,3.4V12.6M3.4,8H12.6" stroke="#222" stroke-width=".8"/><rect x="6.2" y="6.2" width="3.6" height="3.6" fill="#9a9a9a" stroke="#666" stroke-width=".4"/></svg>
<svg class="abs" style="left:214.0px;top:504.2px" width="16" height="16" viewBox="0 0 16 16"><rect x="5" y="2.4" width="8.8" height="8.8" fill="#fff" stroke="#333" stroke-width=".9"/><path d="M7.4,8.8L11.2,5" stroke="#111" stroke-width="1.1"/><path d="M9,4.2H12V7.2z" fill="#111"/><rect x="2" y="8.6" width="5.4" height="5.4" fill="#8e8e8e" stroke="#666" stroke-width=".5"/></svg>
<svg class="abs" style="left:229.7px;top:504.2px" width="16" height="16" viewBox="0 0 16 16"><path d="M2.6,7A5.6,5.6 0 0 1 13,5.4" fill="none" stroke="#222" stroke-width="1.1"/><path d="M13.4,9A5.6,5.6 0 0 1 3,10.6" fill="none" stroke="#222" stroke-width="1.1"/><path d="M11.2,5.8L14.4,6.4L14,3.2z" fill="#222"/><path d="M4.8,10.2L1.6,9.6L2,12.8z" fill="#222"/><path d="M8,4.8L11.2,8L8,11.2L4.8,8z" fill="#8e8e8e" stroke="#666" stroke-width=".4"/></svg>
<svg class="abs" style="left:246.0px;top:504.2px" width="16" height="16" viewBox="0 0 16 16"><circle cx="8" cy="8.6" r="5.6" fill="none" stroke="#333" stroke-width=".9" stroke-dasharray="5 2.2"/><path d="M5.6,7.2L8,6L10.4,7.2V10L8,11.4L5.6,10z" fill="#8a8a8a" stroke="#555" stroke-width=".4"/><path d="M5.6,7.2L8,8.4L10.4,7.2" fill="none" stroke="#555" stroke-width=".4"/><path d="M8,2.6V5.6" stroke="#2a4fd8" stroke-width=".9"/><circle cx="8" cy="1.8" r="1" fill="#2a4fd8"/><path d="M2.2,12.6L5.2,10.6" stroke="#e02626" stroke-width="1"/><path d="M1.2,12L3.4,13.4L1.6,14z" fill="#e02626"/><path d="M13.8,12.6L10.8,10.6" stroke="#2faa3a" stroke-width="1"/><path d="M14.8,12L12.6,13.4L14.4,14z" fill="#2faa3a"/></svg>
<div class="sep" style="left:263px;top:505.5px;height:13.5px"></div>
<svg class="abs" style="left:266.0px;top:504.2px" width="16" height="16" viewBox="0 0 16 16"><path d="M7.2,3.4L11,1.2L13.6,5.2L9.8,7.6z" fill="#8e8e8e" stroke="#666" stroke-width=".4"/><path d="M3,13.8H13.6" stroke="#222" stroke-width="1.3"/><path d="M6.8,7V11.4" stroke="#2faa3a" stroke-width="1"/><path d="M5.2,10.4L6.8,12.8L8.4,10.4z" fill="#2faa3a"/></svg>
<div class="sep" style="left:282.8px;top:505.5px;height:13.5px"></div>
<svg class="abs" style="left:284.5px;top:504.2px" width="16" height="16" viewBox="0 0 16 16"><path d="M2.4,3L6.6,7L2.4,11z" fill="#8e8e8e" stroke="#6a6a6a" stroke-width=".4"/><path d="M13.8,2.8L9.6,7L13.8,11.2" fill="none" stroke="#777" stroke-width=".5"/><path d="M13.8,3.4V5M13.8,6.4V7.6" stroke="#777" stroke-width=".5"/><path d="M8,1.6V9.4" stroke="#e02626" stroke-width=".5" opacity=".55"/><text x="8" y="13.9" font-size="5.4" font-weight="bold" text-anchor="middle" fill="#e02626" font-family="Liberation Sans,sans-serif">X</text></svg>
<svg class="abs" style="left:301.0px;top:504.2px" width="16" height="16" viewBox="0 0 16 16"><path d="M2.4,3L6.6,7L2.4,11z" fill="#8e8e8e" stroke="#6a6a6a" stroke-width=".4"/><path d="M13.8,2.8L9.6,7L13.8,11.2" fill="none" stroke="#777" stroke-width=".5"/><path d="M13.8,3.4V5M13.8,6.4V7.6" stroke="#777" stroke-width=".5"/><path d="M8,1.6V9.4" stroke="#2faa3a" stroke-width=".5" opacity=".55"/><text x="8" y="13.9" font-size="5.4" font-weight="bold" text-anchor="middle" fill="#2faa3a" font-family="Liberation Sans,sans-serif">Y</text></svg>
<svg class="abs" style="left:316.9px;top:504.2px" width="16" height="16" viewBox="0 0 16 16"><path d="M2.4,3L6.6,7L2.4,11z" fill="#8e8e8e" stroke="#6a6a6a" stroke-width=".4"/><path d="M13.8,2.8L9.6,7L13.8,11.2" fill="none" stroke="#777" stroke-width=".5"/><path d="M13.8,3.4V5M13.8,6.4V7.6" stroke="#777" stroke-width=".5"/><path d="M8,1.6V9.4" stroke="#2a4fd8" stroke-width=".5" opacity=".55"/><text x="8" y="13.9" font-size="5.4" font-weight="bold" text-anchor="middle" fill="#2a4fd8" font-family="Liberation Sans,sans-serif">Z</text></svg>
<div class="sep" style="left:334.2px;top:505.5px;height:13.5px"></div>
<svg class="abs" style="left:337.2px;top:504.2px" width="16" height="16" viewBox="0 0 16 16"><path d="M6.6,3.4L10.4,1.8L14.2,3.4V7.6L10.4,9.2L6.6,7.6z" fill="#fff" stroke="#888" stroke-width=".5"/><path d="M6.6,3.4L10.4,5L14.2,3.4M10.4,5V9.2" fill="none" stroke="#888" stroke-width=".5"/><path d="M1.6,7.4L5.6,5.8L9.6,7.4V12L5.6,13.8L1.6,12z" fill="#6e6e6e" stroke="#333" stroke-width=".5"/><path d="M1.6,7.4L5.6,9L9.6,7.4L5.6,5.8z" fill="#9c9c9c" stroke="#333" stroke-width=".4"/><path d="M5.6,9V13.8" stroke="#333" stroke-width=".4"/></svg>
<div class="sep" style="left:353.2px;top:505.5px;height:13.5px"></div>
<svg class="abs" style="left:355.6px;top:504.2px" width="16" height="16" viewBox="0 0 16 16"><path d="M2,2.2H14Q8,5.4 2,2.2z" fill="#c9c9c9"/><path d="M2,2.2H14" stroke="#aaa" stroke-width=".5"/><path d="M3.4,3.6V14M6.6,4.4V14M9.8,4.4V14M13,3.6V14" stroke="#f0961e" stroke-width="1.5"/><path d="M8,7.6L12.6,12.6" stroke="#2a4fd8" stroke-width="1.5"/><path d="M8.6,6.2l.6,1.2l1.2,.2l-1,1l.2,1.4l-1.2,-.8l-1.2,.6l.4,-1.4l-1,-1l1.4,-.2z" fill="#2a4fd8"/></svg>
<svg class="abs" style="left:371.6px;top:504.2px" width="16" height="16" viewBox="0 0 16 16"><path d="M2,2.2H14Q8,5.4 2,2.2z" fill="#c9c9c9"/><path d="M2,2.2H14" stroke="#aaa" stroke-width=".5"/><path d="M6,3.8V14" stroke="#f0961e" stroke-width="1.6"/><circle cx="9.3" cy="8.9" r="3.2" fill="#3db54a"/><path d="M7.700000000000001,8.9h3.2M9.3,7.300000000000001v3.2" stroke="#fff" stroke-width=".9"/></svg>
<svg class="abs" style="left:388.0px;top:504.2px" width="16" height="16" viewBox="0 0 16 16"><path d="M2,2.2H14Q8,5.4 2,2.2z" fill="#c9c9c9"/><path d="M2,2.2H14" stroke="#aaa" stroke-width=".5"/><path d="M6,3.8V14" stroke="#f0961e" stroke-width="1.6"/><circle cx="9.3" cy="8.9" r="3.2" fill="#c8282a"/><path d="M7.700000000000001,8.9h3.2" stroke="#fff" stroke-width="1"/></svg>
<svg class="abs" style="left:403.8px;top:504.2px" width="16" height="16" viewBox="0 0 16 16"><path d="M2,2.2H14Q8,5.4 2,2.2z" fill="#c9c9c9"/><path d="M2,2.2H14" stroke="#aaa" stroke-width=".5"/><path d="M3.6,3.6V14M6.6,4.2V14" stroke="#f0961e" stroke-width="1.5"/><circle cx="10.3" cy="8.9" r="3.2" fill="#3db54a"/><path d="M8.700000000000001,8.9h3.2M10.3,7.300000000000001v3.2" stroke="#fff" stroke-width=".9"/></svg>
<svg class="abs" style="left:420.0px;top:504.2px" width="16" height="16" viewBox="0 0 16 16"><path d="M2,2.2H14Q8,5.4 2,2.2z" fill="#c9c9c9"/><path d="M2,2.2H14" stroke="#aaa" stroke-width=".5"/><path d="M3.6,3.6V14M6.6,4.2V14" stroke="#f0961e" stroke-width="1.5"/><circle cx="10.3" cy="8.9" r="3.2" fill="#c8282a"/><path d="M8.700000000000001,8.9h3.2" stroke="#fff" stroke-width="1"/></svg>
<svg class="abs" style="left:436.2px;top:504.2px" width="16" height="16" viewBox="0 0 16 16"><path d="M2,2.2H14Q8,5.4 2,2.2z" fill="#c9c9c9"/><path d="M2,2.2H14" stroke="#aaa" stroke-width=".5"/><path d="M5.4,7.4H10.6L10.2,13.2H5.8z" fill="#c8282a"/><path d="M5,6.4H11" stroke="#c8282a" stroke-width="1"/><path d="M7,5.9V5.3H9V5.9" stroke="#c8282a" stroke-width=".6" fill="none"/><path d="M7,8.2V12.4M9,8.2V12.4" stroke="#f0b4b4" stroke-width=".6"/></svg>
<div class="abs" style="left:974.6px;top:223.0px;width:18.8px;height:18.4px;background:#fbfbfb;border:1px solid #dedede;border-radius:2px"></div>
<svg class="abs" style="left:975.5px;top:223.7px" width="17" height="17" viewBox="0 0 17 17"><rect x="8.6" y="1.2" width="7.4" height="7" fill="#fff" stroke="#bbb" stroke-width=".4"/><path d="M9.4,2.6h2" stroke="#e02626" stroke-width=".9"/><path d="M9.4,4.4h2" stroke="#2faa3a" stroke-width=".9"/><path d="M9.4,6.2h2" stroke="#2a4fd8" stroke-width=".9"/><path d="M12.2,2.6h3M12.2,4.4h3M12.2,6.2h3" stroke="#999" stroke-width=".5"/><path d="M1.8,7L6.6,5L11.4,7V13L6.6,15.4L1.8,13z" fill="#6e6e6e" stroke="#333" stroke-width=".5"/><path d="M1.8,7L6.6,9L11.4,7L6.6,5z" fill="#a0a0a0" stroke="#333" stroke-width=".4"/><path d="M6.6,9V15.4" stroke="#333" stroke-width=".4"/></svg>
<div class="abs" style="left:974.6px;top:251.3px;width:18.8px;height:18.4px;background:#fbfbfb;border:1px solid #dedede;border-radius:2px"></div>
<svg class="abs" style="left:975.5px;top:252.0px" width="17" height="17" viewBox="0 0 17 17"><path d="M2,1.8H15Q8.5,5 2,1.8z" fill="#c9c9c9"/><path d="M3.2,3.2V15M6.4,4V15M9.6,4V10M12.8,3.2V9" stroke="#f0961e" stroke-width="1.6"/><circle cx="12" cy="12" r="3.3" fill="#2452c8"/><path d="M10.4,13.6L13.6,10.4" stroke="#fff" stroke-width="1.1"/></svg>
<div class="abs" style="left:974.6px;top:279.1px;width:18.8px;height:18.4px;background:#fbfbfb;border:1px solid #dedede;border-radius:2px"></div>
<svg class="abs" style="left:975.5px;top:279.8px" width="17" height="17" viewBox="0 0 17 17"><path d="M4,3.4L11,2L14.6,4.6V12.4L11.4,15.4L4,13.6z" fill="#555" stroke="#333" stroke-width=".4"/><path d="M4,3.4L11,5.4V15.2L4,13.6z" fill="#b32020" stroke="#7a1010" stroke-width=".4"/><path d="M11,5.4L14.6,4.6V12.4L11.4,15.4z" fill="#666"/><path d="M2.4,4V13.6M4,15.2L10,16.4" stroke="#888" stroke-width=".4"/></svg>
<div class="abs" style="left:974.6px;top:306.8px;width:18.8px;height:18.4px;background:#fbfbfb;border:1px solid #dedede;border-radius:2px"></div>
<svg class="abs" style="left:975.5px;top:307.5px" width="17" height="17" viewBox="0 0 17 17"><rect x="2.4" y="1.4" width="12.4" height="8" fill="#fff" stroke="#444" stroke-width=".6"/><path d="M2.4,4h12.4M2.4,6.6h12.4M6.4,1.4v8M10.6,1.4v8" stroke="#bbb" stroke-width=".3"/><path d="M3.4,8L6.4,6.4L9,6.8L11.4,4.4L14,3.4" fill="none" stroke="#2faa3a" stroke-width=".8"/><g><path d="M3.4,11V15.6" stroke="#2a4fd8" stroke-width="1"/><path d="M1.6,13.6H5.2" stroke="#2a4fd8" stroke-width="1.2"/><path d="M8.5,11V15.6" stroke="#2a4fd8" stroke-width="1"/><path d="M6.8,12.6H10.2" stroke="#2a4fd8" stroke-width="1.2"/><path d="M13.6,11V15.6" stroke="#d12b2b" stroke-width="1"/><path d="M11.8,13.4H15.4" stroke="#d12b2b" stroke-width="1.4"/></g></svg>
<div id="status">Fichier de construction analysé avec succès: slice-20230611-100053-172.gcode</div>
<div id="taskbar"><svg class="abs" style="left:10.8px;top:6.6px" width="12.4" height="12.4" viewBox="0 0 12.4 12.4"><defs><linearGradient id="wg" x1="0" y1="0" x2="1" y2="1"><stop offset="0" stop-color="#6fd4fb"/><stop offset="1" stop-color="#1ea3ea"/></linearGradient></defs><g fill="url(#wg)"><rect x="0" y="0" width="5.9" height="5.9" rx=".5"/><rect x="6.5" y="0" width="5.9" height="5.9" rx=".5"/><rect x="0" y="6.5" width="5.9" height="5.9" rx=".5"/><rect x="6.5" y="6.5" width="5.9" height="5.9" rx=".5"/></g></svg>
<div class="abs" style="left:30px;top:4px;width:61px;height:17.2px;border-radius:8.6px;background:#20373d"></div>
<svg class="abs" style="left:40.6px;top:8.8px" width="8" height="8" viewBox="0 0 8 8"><circle cx="4.6" cy="3.4" r="2.5" fill="none" stroke="#fff" stroke-width=".9"/><path d="M2.8,5.2L0.8,7.2" stroke="#fff" stroke-width="1"/></svg>
<div class="abs" style="left:52px;top:9px;font-size:6.1px;line-height:8px;color:#fff;font-weight:bold;letter-spacing:-.32px;white-space:nowrap">Recherche</div>
<svg class="abs" style="left:97.6px;top:7.5px" width="14" height="11" viewBox="0 0 14 11"><rect x="0.4" y="3" width="8.6" height="7.4" rx=".8" fill="#7d7d7d"/><rect x="4" y="0.4" width="9.4" height="8" rx=".8" fill="#f1f1f1"/><rect x="4" y="3" width="5" height="5.4" fill="#c9c9c9"/></svg>
<svg class="abs" style="left:121.5px;top:7.4px" width="13" height="12" viewBox="0 0 13 12"><rect x="5.6" y="0.6" width="5.4" height="4.4" fill="#1e3fae" stroke="#cfd6e8" stroke-width=".6"/><rect x="1.4" y="5.6" width="5.4" height="4.4" fill="#1e3fae" stroke="#cfd6e8" stroke-width=".6"/><path d="M4,5.6L8,5" stroke="#e8d83a" stroke-width="1"/><path d="M8.8,5.4L11.8,3.4" stroke="#e8d83a" stroke-width="1"/><rect x="0.8" y="10.4" width="6.6" height="1.2" fill="#b9b9b9"/></svg>
<svg class="abs" style="left:143.1px;top:4.6px" width="15" height="14" viewBox="0 0 15 14"><rect x="0.8" y="0.6" width="9" height="9.4" rx="1" fill="#e9e9ee"/><rect x="2.4" y="2" width="5.8" height="5.8" fill="none" stroke="#d9432a" stroke-width="1" stroke-dasharray="1.2 .6"/><rect x="3.6" y="3.2" width="3.4" height="3.4" fill="#f2d3cc"/><path d="M7.4,12.6L12.6,7.6M8.4,8.6L12.4,12" stroke="#2b8fd9" stroke-width=".8"/><circle cx="13.2" cy="7.4" r=".9" fill="none" stroke="#2b8fd9" stroke-width=".6"/><circle cx="7" cy="13" r=".9" fill="none" stroke="#2b8fd9" stroke-width=".6"/></svg>
<div class="abs" style="left:149.6px;top:21.6px;width:2.4px;height:.9px;background:#9aa4a8;border-radius:.4px"></div>
<svg class="abs" style="left:167.4px;top:6.4px" width="12.4" height="12.4" viewBox="0 0 12.4 12.4"><rect x="0" y="0" width="12.4" height="12.4" rx="1" fill="#c8161d"/><path d="M3,6.4L6.2,9L9.4,6.4" fill="none" stroke="#fff" stroke-width="1.3"/><path d="M4.6,2H7.8V6H4.6z" fill="#f0b6b8"/><path d="M2,10.2H10.4" stroke="#fff" stroke-width=".9"/></svg>
<svg class="abs" style="left:190.1px;top:6.5px" width="13" height="13" viewBox="0 0 13 13"><circle cx="6.5" cy="6.5" r="6" fill="#1f5fcf"/><path d="M2,3.6A6,6 0 0 1 12.4,5.6Q9,2.6 5.6,4.2z" fill="#6fb4ff"/><path d="M2.4,6.2H10.2V10.6H2.4z" fill="#eef2f8"/><path d="M2.4,6.2L6.3,8.8L10.2,6.2" fill="none" stroke="#9fb2cc" stroke-width=".5"/></svg>
<svg class="abs" style="left:213.3px;top:6.7px" width="12.6" height="12.6" viewBox="0 0 12.6 12.6"><rect x="0" y="0" width="12.6" height="12.6" rx="1.6" fill="#e9effa"/><rect x="1.2" y="1.2" width="10.2" height="10.2" rx="1.2" fill="#1b66e6"/><path d="M8.4,4.6A2.5,2.5 0 1 0 8.4,8" fill="none" stroke="#fff" stroke-width="1.1"/></svg>
<svg class="abs" style="left:235.4px;top:7.0px" width="14" height="12" viewBox="0 0 14 12"><path d="M0.6,1.2H5L6.4,2.6H13.4V11H0.6z" fill="#e9a21a"/><path d="M0.6,3.6H13.4V11.2H0.6z" fill="#f9d040"/><rect x="4.6" y="8.4" width="4.8" height="2.8" fill="#2b8fe0"/></svg>
<svg class="abs" style="left:258.7px;top:6.5px" width="13" height="13" viewBox="0 0 13 13"><circle cx="6.5" cy="6.5" r="6.2" fill="#e33b2e"/><path d="M6.5,6.5L1.2,3.4A6.2,6.2 0 0 0 5.4,12.6z" fill="#2da94f"/><path d="M6.5,6.5L5.4,12.6A6.2,6.2 0 0 0 12.7,6.5z" fill="#fcc31e"/><path d="M6.5,6.5H12.7A6.2,6.2 0 0 0 11.8,3.4z" fill="#e33b2e"/><circle cx="6.5" cy="6.5" r="2.9" fill="#fff"/><circle cx="6.5" cy="6.5" r="2.2" fill="#3b7ded"/></svg>
<svg class="abs" style="left:282.2px;top:6.5px" width="12" height="13" viewBox="0 0 12 13"><ellipse cx="6" cy="6.5" rx="5.6" ry="6.1" fill="#e0121f"/><ellipse cx="6" cy="6.5" rx="2.2" ry="4" fill="#13272d"/></svg>
<svg class="abs" style="left:304.7px;top:6.7px" width="12.6" height="12.6" viewBox="0 0 12.6 12.6"><rect x="0" y="0" width="12.6" height="12.6" rx=".8" fill="#a3161c"/><path d="M2,9.6Q2.4,3.6 7,2.4Q10.4,2 11.4,4.4Q8.6,3.8 7.4,5.6Q10,6.2 10.2,9.2Q8.4,7.4 6.2,8.2Q6.6,10 8.6,11H3.4Q4.2,9 2,9.6z" fill="#f2e9e6"/></svg>
<svg class="abs" style="left:326.5px;top:6.5px" width="15" height="13" viewBox="0 0 15 13"><path d="M1,1.4H7V3.8H3.6V6H6.4V8.2H3.6V11.8H1z" fill="#e9501a"/><circle cx="9.8" cy="8" r="3.6" fill="#2a57c9"/><circle cx="9.8" cy="8" r="4.2" fill="none" stroke="#2a57c9" stroke-width="1.4" stroke-dasharray="1.3 1"/><circle cx="9.8" cy="8" r="1.5" fill="#13272d"/></svg>
<div class="abs" style="left:346px;top:2px;width:20.6px;height:21px;border-radius:2px;background:#23383f"></div>
<svg class="abs" style="left:350.2px;top:5.9px" width="12" height="13" viewBox="0 0 12 13"><rect x="0.4" y="2.6" width="2.8" height="8" rx="1.3" fill="#d4177f"/><rect x="2.6" y="1.6" width="2.4" height="10" rx="1.2" fill="#8a2ea8"/><rect x="4.4" y="0.4" width="3.2" height="12.2" rx="1.6" fill="#3aa635"/><rect x="7" y="1.6" width="2.4" height="10" rx="1.2" fill="#2448b8"/><rect x="8.8" y="2.6" width="2.8" height="8" rx="1.3" fill="#2d9be8"/></svg>
<div class="abs" style="left:352px;top:21.8px;width:8.4px;height:1.4px;border-radius:.7px;background:#6cc3ee"></div>
<svg class="abs" style="left:891.5px;top:10.1px" width="7" height="5" viewBox="0 0 7 5"><path d="M0.8,4L3.5,1.2L6.2,4" fill="none" stroke="#fff" stroke-width=".9"/></svg>
<svg class="abs" style="left:903.0px;top:8.4px" width="10" height="10" viewBox="0 0 10 10"><path d="M4.4,0.6L8.2,1.8V4.8Q8,7.6 4.4,9.2Q0.8,7.6 0.6,4.8V1.8z" fill="#2a8fe3"/><path d="M4.4,0.6L8.2,1.8V4.8H4.4z" fill="#1463b8"/><circle cx="6.6" cy="7" r="2.4" fill="#21a83c"/><path d="M5.4,7L6.3,7.9L7.8,6.2" fill="none" stroke="#fff" stroke-width=".6"/></svg>
<svg class="abs" style="left:917.4px;top:8.9px" width="10" height="9" viewBox="0 0 10 9"><rect x="0.6" y="1.6" width="6.2" height="4.8" fill="none" stroke="#fff" stroke-width=".7"/><path d="M2.4,8H5.2M3.8,6.4V8" stroke="#fff" stroke-width=".7"/><rect x="7" y="0.6" width="1.8" height="2" fill="none" stroke="#fff" stroke-width=".6"/><path d="M7.9,2.6V8H6.4" fill="none" stroke="#fff" stroke-width=".6"/></svg>
<svg class="abs" style="left:929.9px;top:9.4px" width="9" height="8" viewBox="0 0 9 8"><path d="M0.6,3H2.2L4.4,1V7L2.2,5H0.6z" fill="none" stroke="#fff" stroke-width=".7"/><path d="M5.6,2.4Q6.6,4 5.6,5.6" fill="none" stroke="#ddd" stroke-width=".5"/><path d="M6.8,1.4Q8.4,4 6.8,6.6" fill="none" stroke="#999" stroke-width=".5"/></svg>
<div class="abs" style="left:930px;top:4.6px;width:47.4px;text-align:right;font-size:6.1px;line-height:8.1px;color:#fff;letter-spacing:-.05px;white-space:nowrap">10:01<br>11/06/2023</div>
<div class="abs" style="left:981px;top:8.8px;width:8.2px;height:8.2px;border-radius:50%;background:#7fcaf0;color:#0c2a3a;font-size:5.4px;line-height:8.2px;text-align:center;font-weight:bold">1</div></div>
</body></html>
